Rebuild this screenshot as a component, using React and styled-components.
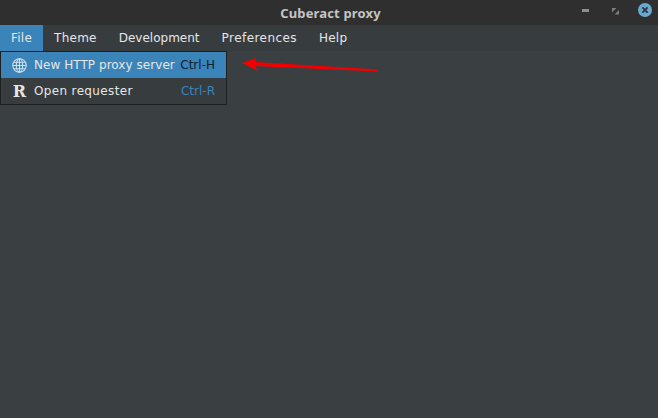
import React from "react";
import styled, { createGlobalStyle } from "styled-components";

const Global = createGlobalStyle`
  html, body {
    margin: 0;
    padding: 0;
    height: 100%;
    overflow: hidden;
    background: #3a3f42;
  }
`;

const Window = styled.div`
  position: relative;
  width: 658px;
  height: 418px;
  display: flex;
  flex-direction: column;
  background: #3a3f42;
  font-family: "DejaVu Sans", sans-serif;
  font-size: 12px;
  color: #e8e8e8;
`;

const TitleBar = styled.div`
  position: relative;
  flex: 0 0 25px;
  display: flex;
  align-items: center;
  justify-content: center;
  background: #2f2f2f;
`;

const Title = styled.div`
  font-family: "Noto Sans", sans-serif;
  font-weight: 700;
  font-size: 13px;
  letter-spacing: 0.15px;
  color: #c4c4c4;
  padding-left: 3px;
`;

const WindowButtons = styled.div`
  position: absolute;
  right: 6px;
  top: 3px;
  display: flex;
  align-items: center;
`;

const WindowButton = styled.div`
  display: flex;
  margin-left: ${(p) => p.$gap || 0}px;
`;

const MenuBar = styled.div`
  flex: 0 0 26px;
  display: flex;
  background: #373c3f;
`;

const MenuItem = styled.div`
  display: flex;
  align-items: center;
  padding: 0 11px;
  color: #e6e6e6;
  letter-spacing: ${(p) => p.$track || 0}px;
  background: ${(p) => (p.$active ? "#3a84b9" : "transparent")};
`;

const Dropdown = styled.div`
  position: absolute;
  left: 0;
  top: 51px;
  width: 225px;
  border: 1px solid #1c2023;
  background: #373c3f;
`;

const Row = styled.div`
  height: 26px;
  display: flex;
  align-items: center;
  white-space: nowrap;
  background: ${(p) => (p.$active ? "#3a84b9" : "transparent")};
`;

const RowIcon = styled.div`
  flex: 0 0 33px;
  display: flex;
  justify-content: center;
  padding-left: 4px;
  box-sizing: border-box;
`;

const RowLabel = styled.div`
  flex: 1;
  color: #e6e6e6;
  letter-spacing: ${(p) => p.$track || 0}px;
`;

const Shortcut = styled.div`
  padding-right: 11px;
  color: ${(p) => (p.$active ? "#10202c" : "#3a84b9")};
`;

const RIcon = styled.span`
  font-family: "DejaVu Serif", serif;
  font-weight: 700;
  font-size: 16px;
  line-height: 17px;
  color: #e4e4e4;
`;

const Annotation = styled.svg`
  position: absolute;
  left: 236px;
  top: 54px;
`;

const GlobeIcon = () => (
  <svg width="15" height="15" viewBox="0 0 16 16" fill="none" stroke="#d5dfe6" strokeWidth="1.1">
    <circle cx="8" cy="8" r="7.200" />
    <ellipse cx="8" cy="8" rx="3.400" ry="7.200" />
    <path d="M8 1v14M1 8h14M2 4.500h12M2 11.500h12" />
  </svg>
);

const MinimizeIcon = () => (
  <svg width="7" height="14" viewBox="0 0 7 14">
    <rect x="0" y="6" width="7" height="3" fill="#8e8e8e" />
  </svg>
);

const RestoreIcon = () => (
  <svg width="7" height="14" viewBox="0 0 7 14">
    <path d="M0 5h4.500L0 9.500zM7 7v4.500H2.500z" fill="#7e7e7e" />
  </svg>
);

const CloseIcon = () => (
  <svg width="14" height="14" viewBox="0 0 14 14">
    <circle cx="7" cy="7" r="7" fill="#6aa8d0" />
    <path d="M4.400 4.400l5.200 5.200M9.600 4.400l-5.200 5.200" stroke="#2c3a44" strokeWidth="2" />
  </svg>
);

export default function App() {
  return (
    <Window>
      <Global />
      <TitleBar>
        <Title>Cuberact proxy</Title>
        <WindowButtons>
          <WindowButton><MinimizeIcon /></WindowButton>
          <WindowButton $gap={23}><RestoreIcon /></WindowButton>
          <WindowButton $gap={19}><CloseIcon /></WindowButton>
        </WindowButtons>
      </TitleBar>
      <MenuBar>
        <MenuItem $active $track={0.25}>File</MenuItem>
        <MenuItem $track={0.25}>Theme</MenuItem>
        <MenuItem>Development</MenuItem>
        <MenuItem $track={0.45}>Preferences</MenuItem>
        <MenuItem $track={0.2}>Help</MenuItem>
      </MenuBar>
      <Dropdown>
        <Row $active>
          <RowIcon><GlobeIcon /></RowIcon>
          <RowLabel $track={0.05}>New HTTP proxy server</RowLabel>
          <Shortcut $active>Ctrl-H</Shortcut>
        </Row>
        <Row>
          <RowIcon><RIcon>R</RIcon></RowIcon>
          <RowLabel $track={0.35}>Open requester</RowLabel>
          <Shortcut>Ctrl-R</Shortcut>
        </Row>
      </Dropdown>
      <Annotation width="146" height="20" viewBox="0 0 146 20">
        <path d="M6 9l14-5-1 4 123 7.500v2L19 12l3 5z" fill="#f20000" />
      </Annotation>
    </Window>
  );
}
